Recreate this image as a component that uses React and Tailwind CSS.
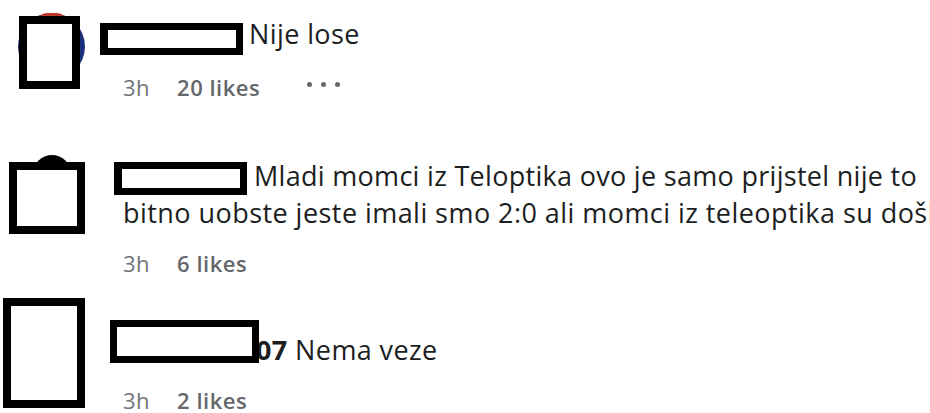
import React from 'react'

const Redact = ({ className = '' }) => (
  <span className={`relative z-10 inline-block border-black bg-white ${className}`} />
)

const Meta = ({ likes, more = false, className = '' }) => (
  <div className={`flex items-center text-[22px] leading-[30px] tracking-[0.5px] ${className}`}>
    <span className="text-[#717478]">3h</span>
    <span className="ml-[27px] font-semibold text-[#65676b]">{likes} likes</span>
    {more && (
      <span className="-mt-[5px] ml-[47px] flex items-center gap-[9px]">
        <span className="h-[5px] w-[5px] rounded-full bg-[#65676b]" />
        <span className="h-[5px] w-[5px] rounded-full bg-[#65676b]" />
        <span className="h-[5px] w-[5px] rounded-full bg-[#65676b]" />
      </span>
    )}
  </div>
)

export default function App() {
  return (
    <div className="h-[413px] w-[930px] overflow-hidden bg-white font-['Open_Sans','Noto_Sans',sans-serif] text-[#1c1e21]">
      {/* comment 1 */}
      <div className="flex pt-[13px]">
        <div className="w-[123px] shrink-0">
          <div className="relative ml-[18px] h-[76px] w-[67px]">
            <div className="absolute left-0 top-0 h-[67px] w-[67px] rounded-full bg-[#1b2f7a]">
              <div className="mx-auto h-[10px] w-[30px] rounded-t-full bg-[#c0392b]" />
            </div>
            <div className="absolute left-[1px] top-[3px] h-[73px] w-[61px] border-[8px] border-black bg-white" />
          </div>
        </div>
        <div className="w-[900px] shrink-0 pt-[3px]">
          <p className="text-[27px] leading-[36px] tracking-[0.4px]">
            <Redact className="-ml-[23px] mr-[6px] h-[32px] w-[143px] border-[7px] border-l-[8px] align-[-11px]" />
            Nije lose
          </p>
          <Meta likes={20} more className="mt-[17px]" />
        </div>
      </div>

      {/* comment 2 */}
      <div className="mt-[53px] flex">
        <div className="w-[123px] shrink-0">
          <div className="relative ml-[9px] h-[79px] w-[76px]">
            <div className="absolute left-[24px] top-0 h-[60px] w-[38px] rounded-t-full bg-black" />
            <div className="absolute left-0 top-[7px] h-[72px] w-[76px] border-[8px] border-black bg-white" />
          </div>
        </div>
        <div className="w-[900px] shrink-0 pt-[3px]">
          <p className="text-[27px] leading-[35px] tracking-[0.3px] whitespace-nowrap">
            <Redact className="-ml-[9px] mr-[7px] h-[33px] w-[133px] border-[7px] border-l-[8px] align-[-9px]" />
            Mladi momci iz Teloptika ovo je samo prijstel nije to
            <br />
            <span className="tracking-[0.45px]">bitno uobste jeste imali smo 2:0 ali momci iz teleoptika su došli</span>
          </p>
          <Meta likes={6} className="mt-[18px]" />
        </div>
      </div>

      {/* comment 3 */}
      <div className="mt-[20px] flex">
        <div className="w-[123px] shrink-0">
          <div className="ml-[3px] h-[110px] w-[82px] border-[8px] border-black bg-white" />
        </div>
        <div className="w-[900px] shrink-0 pt-[22px]">
          <p className="text-[27px] leading-[36px] tracking-[0.4px]">
            <Redact className="-ml-[13px] -mr-[3px] h-[43px] w-[149px] border-[7px] align-[-3px]" />
            <span className="font-bold">07</span> Nema veze
          </p>
          <Meta likes={2} className="mt-[17px]" />
        </div>
      </div>
    </div>
  )
}
